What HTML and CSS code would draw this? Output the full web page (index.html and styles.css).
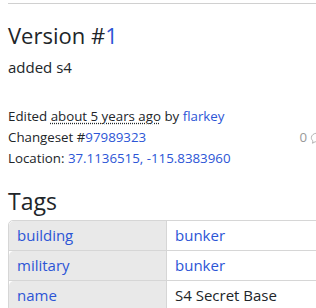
FILE: index.html
```html
<!DOCTYPE html>
<html>

<head>
    <title>Version #1</title>
    <link rel="stylesheet" href="styles.css">
</head>

<body>
    <div class="sidebar">
        <hr class="divider">

        <h2 class="version-title">Version #<a href="#">1</a></h2>
        <p class="comment">added s4</p>

        <div class="details">
            <div>Edited <abbr title="2020-01-14">about 5 years ago</abbr> by <a href="#">flarkey</a></div>
            <div class="changeset-row">
                <span>Changeset #<a href="#">97989323</a></span>
                <span class="comments">0 <svg width="14" height="14" viewBox="0 0 16 16"><path d="M8 2.5c-3.6 0-6.5 2.3-6.5 5.2 0 1.4.7 2.7 1.9 3.6L2.8 14l3.1-1.7c.7.2 1.4.3 2.1.3 3.6 0 6.5-2.3 6.5-5.2S11.6 2.5 8 2.5z" fill="none" stroke="#aaa" stroke-width="1"/></svg></span>
            </div>
            <div>Location: <a href="#">37.1136515, -115.8383960</a></div>
        </div>

        <h3 class="section-title">Tags</h3>
        <table class="tags">
            <tr>
                <th><a href="#">building</a></th>
                <td><a href="#">bunker</a></td>
            </tr>
            <tr>
                <th><a href="#">military</a></th>
                <td><a href="#">bunker</a></td>
            </tr>
            <tr>
                <th><a href="#">name</a></th>
                <td>S4 Secret Base</td>
            </tr>
        </table>
    </div>
</body>
</html>
```
FILE: styles.css
```css
body {
    font-family: "Open Sans", sans-serif;
    color: #212529;
    margin: 0;
    padding: 0 0 0 8px;
    overflow: hidden;
}

a {
    color: #2c55d6;
    text-decoration: none;
}

.sidebar {
    width: 316px;
}

.divider {
    border: none;
    border-top: 1px solid #d0d0d0;
    margin: 3px 0 0;
}

.version-title {
    font-size: 22px;
    font-weight: 400;
    line-height: 1.2;
    margin: 18px 0 9px;
}

.comment {
    font-size: 15px;
    margin: 0 0 29px;
}

.details {
    font-size: 13.3px;
    line-height: 21px;
}

.details abbr {
    text-decoration: underline dotted;
}

.changeset-row {
    display: flex;
    justify-content: space-between;
}

.comments {
    color: #999;
    display: flex;
    align-items: center;
    gap: 3px;
}

.section-title {
    font-size: 23px;
    font-weight: 400;
    line-height: 1.2;
    margin: 19px 0 4px;
}

.tags {
    width: 100%;
    border-collapse: separate;
    border-spacing: 0;
    font-size: 15px;
    border: 1px solid #d6d6d6;
    border-radius: 5px;
}

.tags th,
.tags td {
    text-align: left;
    font-weight: 400;
    height: 29px;
    padding: 0 8px;
    border-bottom: 1px solid #d6d6d6;
}

.tags th {
    width: 141px;
    background-color: #e9e9e9;
    border-right: 1px solid #d6d6d6;
    border-top-left-radius: 5px;
}
```
